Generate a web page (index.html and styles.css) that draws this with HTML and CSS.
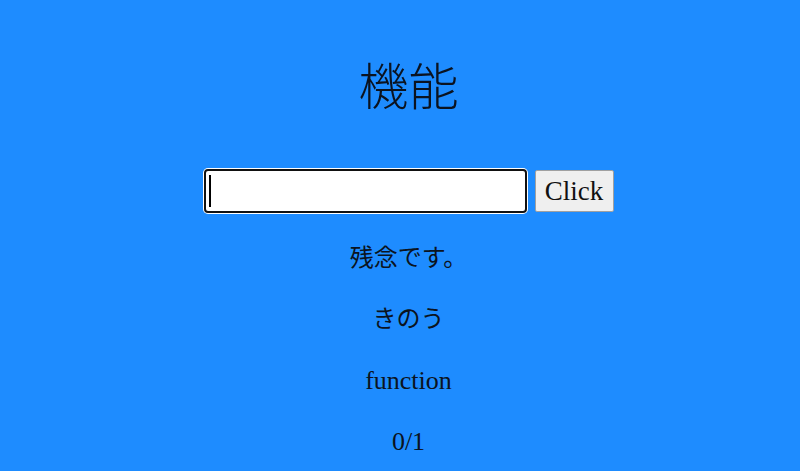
FILE: index.html
```html
<!DOCTYPE html>
<html lang="ja">
<head>
<meta charset="utf-8">
<title>機能</title>
<link rel="stylesheet" href="styles.css">
</head>
<body>
<main class="page">
  <h1 class="title">機能</h1>
  <div class="row">
    <div class="field"><span class="caret"></span></div>
    <button class="btn" type="button">Click</button>
  </div>
  <p class="line">残念です。</p>
  <p class="line">きのう</p>
  <p class="line latin">function</p>
  <p class="line latin">0/1</p>
</main>
</body>
</html>
```
FILE: styles.css
```css
html, body {
  margin: 0;
  padding: 0;
  background: #1e8cff;
}
body {
  font-family: "Liberation Serif", "Noto Sans CJK JP", serif;
  color: #0b1320;
  height: 471px;
  overflow: hidden;
}
.page {
  padding-left: 17px;
  text-align: center;
}
.title {
  font-size: 50px;
  line-height: 56px;
  margin: 0;
  padding-top: 55px;
  font-family: "Noto Sans CJK JP", serif;
  font-weight: 300;
}
.row {
  display: flex;
  justify-content: center;
  align-items: center;
  gap: 8px;
  margin-top: 58px;
}
.field {
  box-sizing: border-box;
  width: 323px;
  height: 44px;
  background: #fff;
  border: 2px solid #111;
  border-radius: 4px;
  box-shadow: 0 0 0 1px #fff;
  display: flex;
  align-items: center;
  padding-left: 3px;
}
.caret {
  width: 2px;
  height: 32px;
  background: #000;
}
.btn {
  box-sizing: border-box;
  width: 79px;
  height: 42px;
  background: #efefef;
  border: 1px solid #a0a0a0;
  border-radius: 2px;
  font-family: "Liberation Serif", serif;
  font-size: 27px;
  color: #111;
  padding: 0;
}
.line {
  font-size: 24px;
  line-height: 37px;
  margin: 24px 0;
}
.row + .line {
  margin-top: 27px;
}
.latin {
  font-size: 26px;
}
```
